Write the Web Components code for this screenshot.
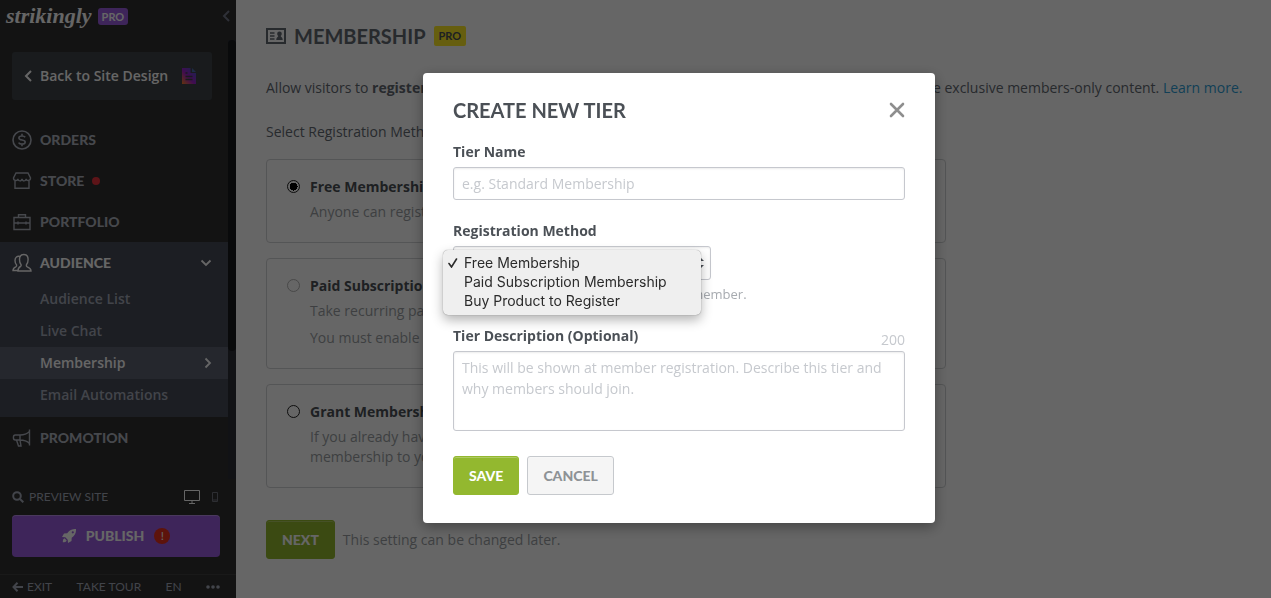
<!DOCTYPE html>
<html lang="en">
<head>
<meta charset="utf-8">
<meta name="viewport" content="width=device-width, initial-scale=1">
<title>Membership - Strikingly</title>
<style>
    body {
        margin: 0;
        overflow: hidden;
        font-family: "Open Sans", "Noto Sans", sans-serif;
        font-size: 14px;
        line-height: 20px;
        color: #636972;
        --display: Lato, "Open Sans", sans-serif;
        --green: #93b82f;
    }
</style>
</head>
<body>
<membership-app></membership-app>

<script>
const ICONS = {
    orders: `<svg width="20" height="20" viewBox="0 0 20 20" fill="none" stroke="currentColor" stroke-width="1.6"><circle cx="10" cy="10" r="9"/><path d="M13.2 7.3C12.6 6.4 11.5 6 10 6 8.300 6 6.900 6.600 6.900 8c0 3 6.300 1 6.300 4 0 1.500-1.500 2.100-3.200 2.100-1.600 0-2.800-.5-3.400-1.500M10 3.800V6M10 14v2.200"/></svg>`,
    store: `<svg width="20" height="20" viewBox="0 0 20 20" fill="none" stroke="currentColor" stroke-width="1.4"><path d="M4 2h12l2.500 5c0 3-3.800 3.500-4.300.8C13.500 10.600 10.500 10.600 10 8c-.5 2.600-3.500 2.600-4.200-.2C5.300 10.500 1.500 10 1.500 7zM3 10v7.200h14V10"/></svg>`,
    portfolio: `<svg width="20" height="20" viewBox="0 0 20 20" fill="none" stroke="currentColor" stroke-width="1.4"><path d="M2 5.500h16v12H2zM6.500 5.500V2.800h7v2.700M2 11h16M6 9.500v3M14 9.500v3"/></svg>`,
    audience: `<svg width="20" height="20" viewBox="0 0 20 20" fill="none" stroke="currentColor" stroke-width="1.4"><path d="M8.500 13.500c.6-.4.800-1 .6-1.700C8 10.600 7.500 9 7.500 6.500 7.500 3.500 9 1.500 11.800 1.500s4.300 2 4.300 5c0 2.500-.6 4.200-1.700 5.300-.2 1 0 1.600.9 2 2.500 1 3.700 1.600 3.700 4.200H6c0-2.500.6-3.700 2.500-4.500z"/><path d="M8.500 3.600C5 2.600 3 4.500 3 7.500c0 2 .5 3.400 1.600 4.500.2.900 0 1.400-.8 1.800C2 14.600 1 15.200 1 17.500h5"/></svg>`,
    promotion: `<svg width="20" height="20" viewBox="0 0 20 20" fill="none" stroke="currentColor" stroke-width="1.4"><path d="M17.500 1.500v16M17.500 3.500C15 6 12 7 8 7H3.200C.8 7 .8 12 3.200 12H8c4 0 7 1 9.500 3.500M8 7v5M4.500 12l2 6H9L8 12"/></svg>`,
    members: `<svg width="20" height="16" viewBox="0 0 20 16" fill="none" stroke="currentColor" stroke-width="2"><path d="M1 1h18v14H1z"/><path d="M4 5h4.500M4 8h4.500M4 11h4.500" stroke-width="1.500"/><path d="M13.500 3.500c3 0 2.600 3.600 1.200 4.500 0 1 2 .9 2 4h-6.400c0-3.100 2-3 2-4-1.400-.9-1.800-4.500 1.200-4.500z" fill="currentColor" stroke="none"/></svg>`,
    left: `<svg width="8" height="12" viewBox="0 0 8 12" fill="none" stroke="currentColor" stroke-width="2"><path d="M7 1L2 6l5 5"/></svg>`,
    right: `<svg width="8" height="12" viewBox="0 0 8 12" fill="none" stroke="currentColor" stroke-width="1.800"><path d="M1.500 1.500L6 6l-4.500 4.500"/></svg>`,
    down: `<svg width="12" height="8" viewBox="0 0 12 8" fill="none" stroke="currentColor" stroke-width="1.800"><path d="M1.500 1.500L6 6l4.500-4.500"/></svg>`,
    page: `<svg width="14" height="16" viewBox="0 0 14 16"><defs><linearGradient id="g" x1="0" y1="1" x2="1" y2="0"><stop offset="0" stop-color="#f78020"/><stop offset=".45" stop-color="#a020c8"/><stop offset="1" stop-color="#3a5cc8"/></linearGradient></defs><path fill="url(#g)" d="M0 0h8.500v5H14v11H0z"/><path fill="#4a6cb0" d="M10 0l4 4h-4z"/><path d="M3.500 5h2M3.500 8.500h7M3.500 11.500h7" stroke="#3f4449" stroke-width="1.600"/></svg>`,
    search: `<svg width="12" height="12" viewBox="0 0 12 12" fill="none" stroke="currentColor" stroke-width="2"><circle cx="5" cy="5" r="3.800"/><path d="M8 8l3.300 3.300"/></svg>`,
    desktop: `<svg width="16" height="14" viewBox="0 0 16 14" fill="none" stroke="currentColor" stroke-width="1"><path d="M.5.5h15v10H.5zM8 10.500v3M5 13.500h6"/></svg>`,
    phone: `<svg width="6" height="10" viewBox="0 0 6 10" fill="none" stroke="currentColor"><path d="M.5.5h5v9h-5zM.5 8h5"/></svg>`,
    rocket: `<svg width="14" height="14" viewBox="0 0 14 14" fill="currentColor"><path fill-rule="evenodd" d="M14 0c.2 4-1 6.500-4.300 8.800L9.500 12 6 14l-.3-3.300L3.300 8.300 0 8l2-3.500 3.200-.2C7.500 1 10 0 14 0zm-3.200 2.200a1.100 1.100 0 100 2.200 1.100 1.100 0 000-2.200zM2.500 9.300L4.700 11.500C4 13 2.600 13.300.8 13.300.8 11.500 1 10 2.500 9.300z"/></svg>`,
    back: `<svg width="11" height="10" viewBox="0 0 11 10" fill="none" stroke="currentColor" stroke-width="2"><path d="M5.500.8L1.500 5l4 4.200M1.500 5H11"/></svg>`,
    more: `<svg width="14" height="4" viewBox="0 0 14 4" fill="currentColor"><circle cx="2" cy="2" r="1.800"/><circle cx="7" cy="2" r="1.800"/><circle cx="12" cy="2" r="1.800"/></svg>`,
    close: `<svg width="16" height="16" viewBox="0 0 16 16" fill="none" stroke="currentColor" stroke-width="2.600" stroke-linecap="round"><path d="M2 2l12 12M14 2L2 14"/></svg>`,
    check: `<svg width="10" height="10" viewBox="0 0 10 10" fill="none" stroke="currentColor" stroke-width="1.600" stroke-linecap="round"><path d="M1 5.500L3.500 9 8.500 1"/></svg>`
};

class BaseElement extends HTMLElement {
    connectedCallback() {
        if (!this.shadowRoot) {
            this.attachShadow({ mode: 'open' });
            this.shadowRoot.innerHTML = this.template();
        }
    }
}

class AppIcon extends BaseElement {
    template() {
        return `
            <style>
                :host { display: inline-flex; flex: none; }
                svg { display: block; }
            </style>
            ${ICONS[this.getAttribute('name')] || ''}
        `;
    }
}

class PlanBadge extends BaseElement {
    template() {
        return `
            <style>
                :host {
                    display: inline-block;
                    padding: 0 4px;
                    border-radius: 3px;
                    background: #9b5de0;
                    color: #fff;
                    font: 700 11px/17px var(--display);
                }
                :host([tone="yellow"]) {
                    padding: 0 5px;
                    border-radius: 2px;
                    background: #ffec27;
                    color: #4b5056;
                    line-height: 20px;
                }
            </style>
            <slot></slot>
        `;
    }
}

class UiButton extends BaseElement {
    template() {
        return `
            <style>
                :host { display: inline-block; }
                button {
                    box-sizing: border-box;
                    height: 39px;
                    padding: 0 15px;
                    border: 1px solid var(--green);
                    border-radius: 3px;
                    background: var(--green);
                    box-shadow: inset 0 1px 0 rgba(255, 255, 255, .25);
                    color: #fff;
                    font: 900 14px/20px var(--display);
                }
                :host([plain]) button {
                    border-color: #c6c9cd;
                    background: #f5f5f5;
                    color: #8e9296;
                }
            </style>
            <button type="button"><slot></slot></button>
        `;
    }
}

class NavItem extends BaseElement {
    template() {
        return `
            <style>
                :host { display: block; color: #aeb3bf; }
                :host([open]) { background: #474b57; padding-bottom: 6px; color: #fff; }
                a {
                    display: flex;
                    align-items: center;
                    gap: 8px;
                    height: 41px;
                    padding: 0 16px 0 12px;
                    color: inherit;
                    text-decoration: none;
                    font: 900 14px/20px var(--display);
                }
                .dot { width: 8px; height: 8px; border-radius: 50%; background: #e8323c; }
                .arrow { margin-left: auto; }
            </style>
            <a href="#">
                <app-icon name="${this.getAttribute('icon')}"></app-icon>
                ${this.getAttribute('label')}
                ${this.hasAttribute('dot') ? '<span class="dot"></span>' : ''}
                ${this.hasAttribute('open') ? '<app-icon class="arrow" name="down"></app-icon>' : ''}
            </a>
            <slot></slot>
        `;
    }
}

class NavSubitem extends BaseElement {
    template() {
        return `
            <style>
                :host { display: block; color: #a5abba; }
                :host([active]) { background: #5d6272; color: #fff; }
                a {
                    display: flex;
                    align-items: center;
                    justify-content: space-between;
                    height: 32px;
                    padding: 0 16px 0 40px;
                    color: inherit;
                    text-decoration: none;
                    font: 600 14px/20px "Open Sans", sans-serif;
                }
            </style>
            <a href="#"><slot></slot>${this.hasAttribute('active') ? '<app-icon name="right"></app-icon>' : ''}</a>
        `;
    }
}

class SideBar extends BaseElement {
    template() {
        return `
            <style>
                :host {
                    display: flex;
                    flex-direction: column;
                    flex: none;
                    width: 236px;
                    background: #303030;
                    color: #a5abba;
                    font-family: var(--display);
                }
                header {
                    display: flex;
                    align-items: center;
                    gap: 6px;
                    height: 32px;
                    padding: 0 6px 8px;
                }
                .logo { color: #fff; font: italic 700 22px/32px "Liberation Serif", serif; }
                .collapse { margin-left: auto; color: #74788a; }
                .scroller { display: flex; flex: 1; min-height: 0; overflow: hidden; }
                nav { flex: 1; }
                .track { width: 8px; background: #2b2e36; }
                .thumb { height: 311px; border-radius: 4px; background: #18191d; }
                .design {
                    display: flex;
                    align-items: center;
                    gap: 8px;
                    height: 48px;
                    margin: 12px 16px 19px 12px;
                    padding: 0 16px 0 12px;
                    border-radius: 3px;
                    background: #3f4449;
                    color: #fff;
                    text-decoration: none;
                    font: 600 14px/20px "Open Sans", sans-serif;
                }
                .design app-icon:last-child { margin-left: auto; }
                .preview {
                    display: flex;
                    align-items: center;
                    gap: 5px;
                    height: 36px;
                    padding: 0 18px 0 12px;
                    font-size: 12px;
                }
                .desktop { margin-left: auto; color: #fff; }
                .phone { margin-left: 7px; color: #70747e; }
                .publish {
                    display: flex;
                    align-items: center;
                    justify-content: center;
                    gap: 10px;
                    height: 42px;
                    margin: 0 16px 17px 12px;
                    border: 0;
                    border-radius: 4px;
                    background: #9b5de0;
                    box-shadow: inset 0 1px 0 rgba(255, 255, 255, .3);
                    color: #fff;
                    font: 900 14px/20px var(--display);
                }
                .alert {
                    width: 16px;
                    border-radius: 50%;
                    background: #e8301c;
                    font-size: 12px;
                    font-weight: 400;
                    line-height: 16px;
                }
                footer {
                    display: flex;
                    align-items: center;
                    justify-content: space-between;
                    height: 23px;
                    padding: 0 16px 0 12px;
                    border-top: 1px solid #404040;
                    font-size: 12px;
                }
                footer a { display: flex; align-items: center; gap: 4px; color: inherit; text-decoration: none; }
            </style>
            <header>
                <span class="logo">strikingly</span>
                <plan-badge>PRO</plan-badge>
                <app-icon class="collapse" name="left"></app-icon>
            </header>
            <div class="scroller">
                <nav>
                    <a class="design" href="#">
                        <app-icon name="left"></app-icon>Back to Site Design<app-icon name="page"></app-icon>
                    </a>
                    <nav-item icon="orders" label="ORDERS"></nav-item>
                    <nav-item icon="store" label="STORE" dot></nav-item>
                    <nav-item icon="portfolio" label="PORTFOLIO"></nav-item>
                    <nav-item icon="audience" label="AUDIENCE" open>
                        <nav-subitem>Audience List</nav-subitem>
                        <nav-subitem>Live Chat</nav-subitem>
                        <nav-subitem active>Membership</nav-subitem>
                        <nav-subitem>Email Automations</nav-subitem>
                    </nav-item>
                    <nav-item icon="promotion" label="PROMOTION"></nav-item>
                </nav>
                <div class="track"><div class="thumb"></div></div>
            </div>
            <div class="preview">
                <app-icon name="search"></app-icon>PREVIEW SITE
                <app-icon class="desktop" name="desktop"></app-icon>
                <app-icon class="phone" name="phone"></app-icon>
            </div>
            <button class="publish" type="button">
                <app-icon name="rocket"></app-icon>PUBLISH<span class="alert">!</span>
            </button>
            <footer>
                <a href="#"><app-icon name="back"></app-icon>EXIT</a>
                <a href="#">TAKE TOUR</a>
                <a href="#">EN</a>
                <a href="#" aria-label="More"><app-icon name="more"></app-icon></a>
            </footer>
        `;
    }
}

class RegistrationOption extends BaseElement {
    template() {
        return `
            <style>
                :host {
                    display: flex;
                    gap: 10px;
                    padding: 16px 20px 20px;
                    border: 1px solid #d2d4d6;
                    border-radius: 4px;
                }
                input {
                    appearance: none;
                    flex: none;
                    box-sizing: border-box;
                    width: 13px;
                    height: 13px;
                    margin: 4px 0 0;
                    border: 1px solid #222;
                    border-radius: 50%;
                }
                input:checked { background: radial-gradient(circle, #000 4px, transparent 4px); }
                input:disabled { border-color: #b4b4b4; }
                label { display: block; color: #4b5056; font-weight: 700; line-height: 22px; }
                .text { display: grid; gap: 7px; margin-top: 4px; color: #9b9fa4; }
                ::slotted(p) { margin: 0; }
            </style>
            <input type="radio" id="option"
                ${this.hasAttribute('checked') ? 'checked' : ''}
                ${this.hasAttribute('disabled') ? 'disabled' : ''}>
            <div>
                <label for="option">${this.getAttribute('label')}</label>
                <div class="text"><slot></slot></div>
            </div>
        `;
    }
}

class MembershipPage extends BaseElement {
    template() {
        return `
            <style>
                :host { display: block; flex: 1; min-width: 0; padding: 24px 20px 24px 30px; background: #fff; }
                header { display: flex; align-items: center; gap: 8px; height: 24px; }
                h1 { margin: 0; color: #636972; font: 700 20px/24px var(--display); }
                p { margin: 0; }
                .intro { margin-top: 30px; }
                .intro a { color: #2f9fd8; text-decoration: none; }
                .select { margin-top: 24px; }
                .options { display: grid; gap: 15px; max-width: 680px; margin-top: 17px; }
                .actions { display: flex; align-items: center; gap: 8px; margin-top: 32px; color: #9b9fa4; }
            </style>
            <header>
                <app-icon name="members"></app-icon>
                <h1>MEMBERSHIP</h1>
                <plan-badge tone="yellow">PRO</plan-badge>
            </header>
            <p class="intro">Allow visitors to <b>register and log in</b> to your site. Build members-only pages and give them access to the exclusive members-only content. <a href="#">Learn more.</a></p>
            <p class="select">Select Registration Method</p>
            <div class="options">
                <registration-option label="Free Membership" checked>
                    <p>Anyone can register.</p>
                </registration-option>
                <registration-option label="Paid Subscription" disabled>
                    <p>Take recurring pay.</p>
                    <p>You must enable it.</p>
                </registration-option>
                <registration-option label="Grant Membership">
                    <p>If you already have it,<br>membership to you.</p>
                </registration-option>
            </div>
            <div class="actions">
                <ui-button>NEXT</ui-button>
                <span>This setting can be changed later.</span>
            </div>
        `;
    }
}

class OptionMenu extends BaseElement {
    template() {
        return `
            <style>
                :host {
                    display: block;
                    box-sizing: border-box;
                    width: 258px;
                    padding: 3px 5px 5px;
                    border-radius: 5px;
                    background: #efefef;
                    box-shadow: 0 0 1px rgba(0, 0, 0, .5), 0 5px 12px rgba(0, 0, 0, .3);
                    color: #2b2b2b;
                    font: 14px/19px Inter, Roboto, sans-serif;
                }
                ul { margin: 0; padding: 0; list-style: none; }
                li { display: grid; grid-template-columns: 16px 1fr; align-items: center; }
                span { grid-column: 2; }
            </style>
            <ul role="listbox" aria-label="Registration Method">
                <li role="option" aria-selected="true"><app-icon name="check"></app-icon><span>Free Membership</span></li>
                <li role="option"><span>Paid Subscription Membership</span></li>
                <li role="option"><span>Buy Product to Register</span></li>
            </ul>
        `;
    }
}

class TierDialog extends BaseElement {
    template() {
        return `
            <style>
                :host {
                    display: block;
                    box-sizing: border-box;
                    width: 512px;
                    padding: 25px 30px 28px;
                    border-radius: 4px;
                    background: #fff;
                    box-shadow: 0 4px 14px rgba(0, 0, 0, .35);
                    color: #4b5056;
                }
                header { display: flex; align-items: center; justify-content: space-between; height: 24px; }
                h2 { margin: 0; font: 700 20px/24px var(--display); }
                .close { display: flex; padding: 0; border: 0; background: none; color: #8e8e8e; }
                label { font-weight: 700; line-height: 20px; }
                input, select, textarea {
                    display: block;
                    box-sizing: border-box;
                    width: 100%;
                    margin: 0;
                    padding: 0 8px;
                    border: 1px solid #c6c8ce;
                    border-radius: 3px;
                    background: #fff;
                    box-shadow: inset 0 1px 2px rgba(0, 0, 0, .08);
                    color: #4b5056;
                    font: 14px/21px "Open Sans", sans-serif;
                }
                input { height: 33px; }
                textarea { height: 80px; padding: 5px 8px; resize: none; }
                ::placeholder { color: #c6c9ce; opacity: 1; }
                .field { display: grid; gap: 5px; margin-top: 20px; }
                .method { position: relative; margin-top: 21px; }
                .picker { position: relative; width: 258px; }
                select { appearance: none; height: 34px; }
                .arrows { position: absolute; top: 11px; right: 7px; }
                option-menu { position: absolute; top: 29px; left: -10px; }
                .hint { margin: 0; color: #a7abb0; font-size: 13px; line-height: 18px; }
                .description { margin-top: 23px; }
                .row { display: flex; justify-content: space-between; }
                .count { padding-top: 4px; color: #c6c9ce; line-height: 20px; height: 16px; }
                .actions { display: flex; gap: 8px; margin-top: 25px; }
            </style>
            <header>
                <h2>CREATE NEW TIER</h2>
                <button class="close" type="button" aria-label="Close"><app-icon name="close"></app-icon></button>
            </header>
            <div class="field">
                <label for="name">Tier Name</label>
                <input id="name" type="text" placeholder="e.g. Standard Membership">
            </div>
            <div class="field method">
                <label for="method">Registration Method</label>
                <div class="picker">
                    <select id="method"><option value="free" aria-label="Free Membership"></option></select>
                    <svg class="arrows" width="8" height="12" viewBox="0 0 8 12" fill="#4b5056"><path d="M4 0l4 4H0zM4 12l4-4H0z"/></svg>
                </div>
                <p class="hint">Everyone can register for free and be a member.</p>
                <option-menu></option-menu>
            </div>
            <div class="field description">
                <div class="row">
                    <label for="description">Tier Description (Optional)</label>
                    <span class="count">200</span>
                </div>
                <textarea id="description" placeholder="This will be shown at member registration. Describe this tier and why members should join."></textarea>
            </div>
            <div class="actions">
                <ui-button>SAVE</ui-button>
                <ui-button plain>CANCEL</ui-button>
            </div>
        `;
    }
}

class MembershipApp extends BaseElement {
    template() {
        return `
            <style>
                :host { display: flex; height: 100vh; overflow: hidden; }
                .overlay {
                    position: fixed;
                    inset: 0;
                    display: flex;
                    align-items: center;
                    justify-content: center;
                    padding: 0 0 2px 87px;
                    background: rgba(0, 0, 0, .6);
                }
            </style>
            <side-bar></side-bar>
            <membership-page></membership-page>
            <div class="overlay">
                <tier-dialog role="dialog" aria-label="Create new tier"></tier-dialog>
            </div>
        `;
    }
}

customElements.define('app-icon', AppIcon);
customElements.define('plan-badge', PlanBadge);
customElements.define('ui-button', UiButton);
customElements.define('nav-item', NavItem);
customElements.define('nav-subitem', NavSubitem);
customElements.define('side-bar', SideBar);
customElements.define('registration-option', RegistrationOption);
customElements.define('option-menu', OptionMenu);
customElements.define('tier-dialog', TierDialog);
customElements.define('membership-page', MembershipPage);
customElements.define('membership-app', MembershipApp);
</script>
</body>
</html>
